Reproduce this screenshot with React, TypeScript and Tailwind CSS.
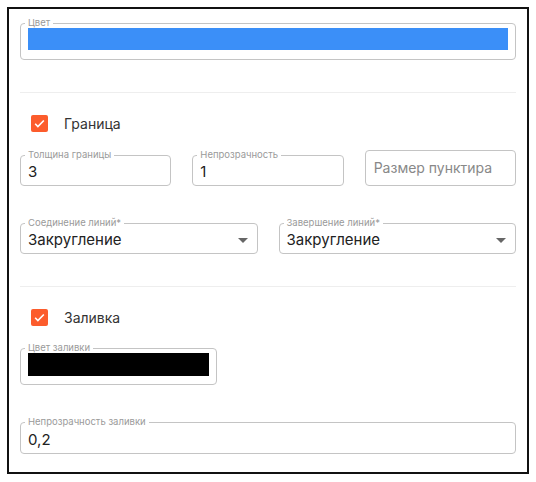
const font = { fontFamily: "Inter, 'Noto Sans', sans-serif" };

function Outlined({ label, className, children }: { label?: string; className?: string; children: React.ReactNode }) {
  return (
    <fieldset className={"relative rounded-[4px] border border-[#c4c4c4] px-[7px] " + (className ?? "")}>
      {label && (
        <legend className="ml-[-3px] px-[3px] text-[9.5px] leading-[10px] text-[#9a9a9a]">{label}</legend>
      )}
      {children}
    </fieldset>
  );
}

function Check({ label }: { label: string }) {
  return (
    <div className="flex items-center h-[18px] pl-[11px]">
      <div className="w-[17px] h-[17px] rounded-[2px] bg-[#fc5c2c] flex items-center justify-center">
        <svg width="13" height="13" viewBox="0 0 24 24" fill="none" stroke="white" strokeWidth="3">
          <path d="M4 12.5l5 5L20 6.5" />
        </svg>
      </div>
      <span className="ml-[16px] text-[14px] text-[#333]">{label}</span>
    </div>
  );
}

function Select({ label }: { label: string }) {
  return (
    <Outlined label={label} className="flex-1 h-[36px]">
      <div className="flex items-center justify-between h-[25px] pr-[2px]">
        <span className="text-[15px] text-[#222]">Закругление</span>
        <svg width="10" height="5" viewBox="0 0 10 5"><path d="M0 0h10L5 5z" fill="#666" /></svg>
      </div>
    </Outlined>
  );
}

export default function App() {
  return (
    <div className="w-[536px] h-[482px] bg-white p-[7px]" style={font}>
      <div className="h-[467px] border-2 border-[#111] px-[11px] pt-[9px] overflow-hidden">
        <Outlined label="Цвет" className="h-[42px]">
          <div className="h-[22px] bg-[#3b8ff8]" />
        </Outlined>
        <div className="mt-[32px] border-t border-[#eee]" />
        <div className="mt-[21px]"><Check label="Граница" /></div>
        <div className="mt-[18px] flex gap-[21px]">
          <Outlined label="Толщина границы" className="flex-1 h-[36px]">
            <div className="text-[15px] text-[#222] leading-[24px]">3</div>
          </Outlined>
          <Outlined label="Непрозрачность" className="flex-1 h-[36px]">
            <div className="text-[15px] text-[#222] leading-[24px]">1</div>
          </Outlined>
          <Outlined className="flex-1 h-[36px]">
            <div className="text-[14px] text-[#888] leading-[34px] pl-[1px]">Размер пунктира</div>
          </Outlined>
        </div>
        <div className="mt-[32px] flex gap-[21px]">
          <Select label="Соединение линий*" />
          <Select label="Завершение линий*" />
        </div>
        <div className="mt-[32px] border-t border-[#eee]" />
        <div className="mt-[21px]"><Check label="Заливка" /></div>
        <Outlined label="Цвет заливки" className="mt-[17px] w-[197px] h-[42px]">
          <div className="h-[23px] bg-black" />
        </Outlined>
        <Outlined label="Непрозрачность заливки" className="mt-[32px] h-[37px]">
          <div className="text-[15px] text-[#222] leading-[25px]">0,2</div>
        </Outlined>
      </div>
    </div>
  );
}
